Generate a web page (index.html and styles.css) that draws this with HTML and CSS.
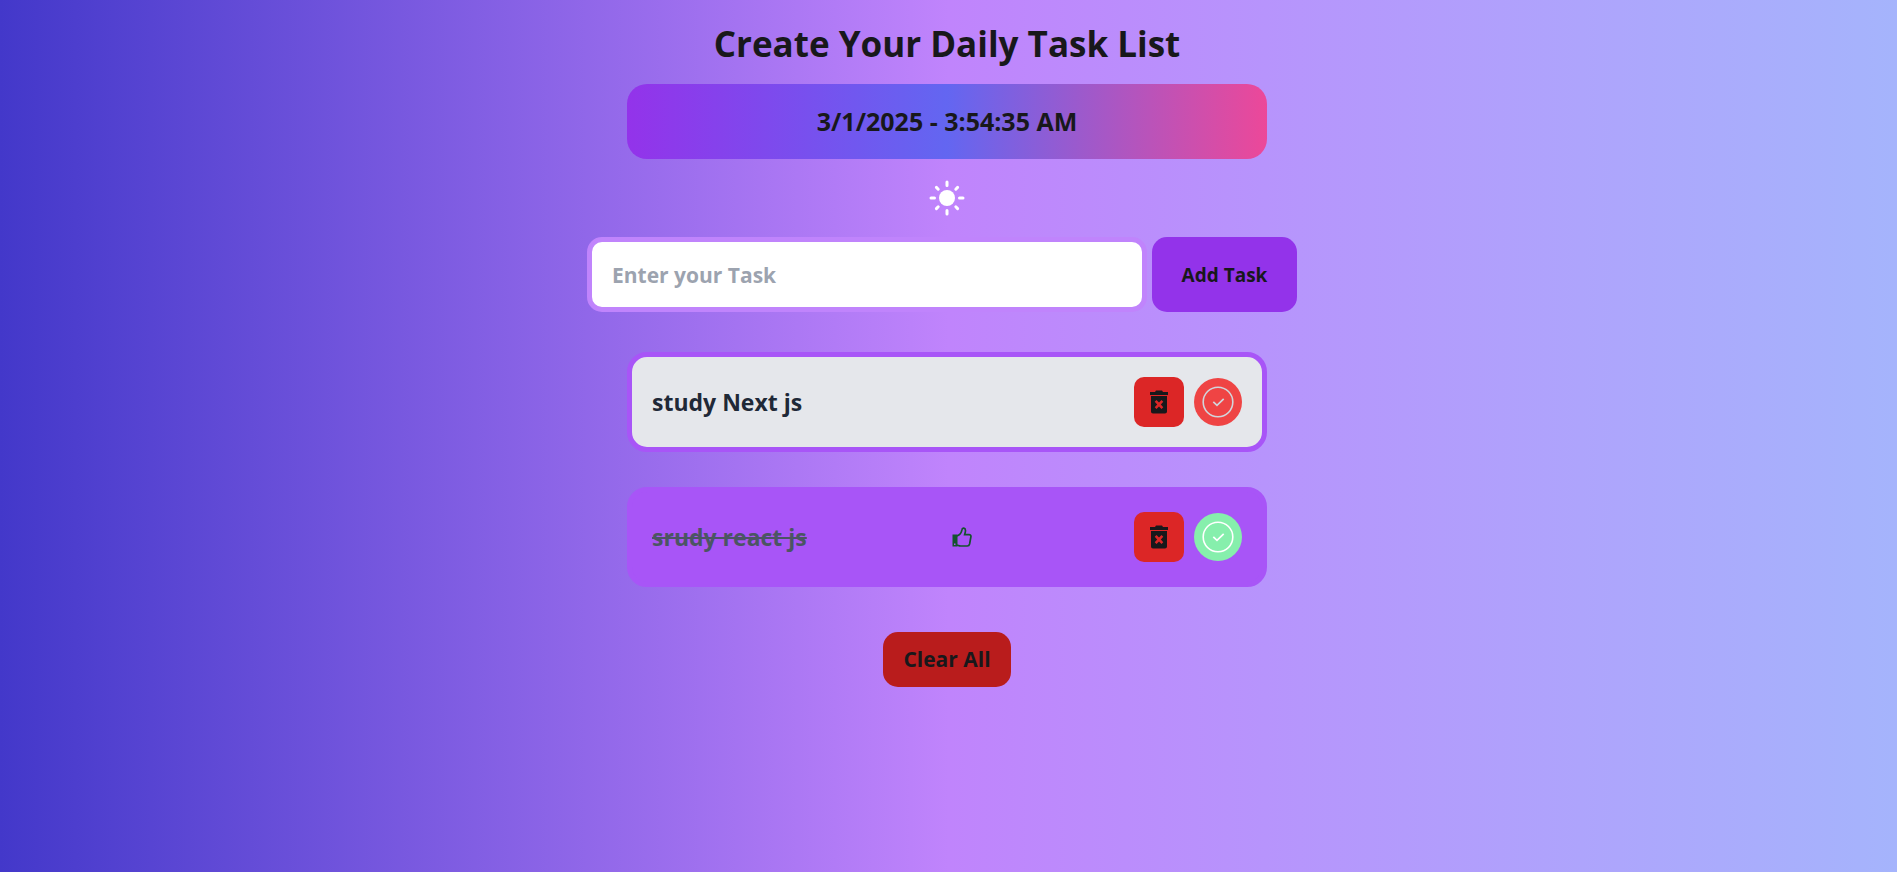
FILE: index.html
```html
<!DOCTYPE html>
<html lang="en">
<head>
<meta charset="utf-8">
<title>Daily Task List</title>
<link rel="stylesheet" href="styles.css">
</head>
<body>
<svg class="sprite" aria-hidden="true">
  <symbol id="trash" viewBox="0 0 24 26">
    <path d="M3 3h5l1-1.500h6L16 3h5v3H3z"/>
    <path fill-rule="evenodd" d="M4 7h16v15.500c0 1.100-.9 2-2 2H6c-1.100 0-2-.9-2-2zM7.700 12.700l2.500 2.800-2.500 2.800 1.800 1.800 2.500-2.700 2.500 2.700 1.800-1.800-2.500-2.800 2.500-2.800-1.800-1.800-2.500 2.700-2.500-2.700z"/>
  </symbol>
  <symbol id="check" viewBox="0 0 32 32">
    <circle cx="16" cy="16" r="14.800" fill="none" stroke="currentColor" stroke-width="1.600"/>
    <path d="M11.300 15.800l3.700 3.500 6.700-6.500" fill="none" stroke="currentColor" stroke-width="1.700"/>
  </symbol>
</svg>
<main class="page">
  <h1 class="title">Create Your Daily Task List</h1>
  <p class="clock">3/1/2025 - 3:54:35 AM</p>
  <button class="theme" type="button" aria-label="Toggle theme">
    <svg viewBox="0 0 40 40" width="40" height="40" stroke="currentColor" stroke-width="3" stroke-linecap="round">
      <circle cx="20" cy="20" r="8" stroke="none"/>
      <path d="M20 4v3.500M20 32.500V36M4 20h3.500M32.500 20H36M9.400 9.400l1.800 1.800M28.800 28.800l1.800 1.800M30.600 9.400l-1.800 1.800M11.200 28.800l-1.800 1.800"/>
    </svg>
  </button>
  <form class="entry">
    <input class="entry-input" type="text" placeholder="Enter your Task" aria-label="Task">
    <button class="entry-add" type="submit">Add Task</button>
  </form>
  <ul class="tasks">
    <li class="task">
      <span class="task-name">study Next js</span>
      <span class="actions">
        <button class="delete" type="button" aria-label="Delete"><svg width="24" height="26"><use href="#trash"/></svg></button>
        <button class="toggle" type="button" aria-label="Mark as done"><svg width="32" height="32"><use href="#check"/></svg></button>
      </span>
    </li>
    <li class="task task-done">
      <span class="task-name">srudy react js</span>
      <svg class="thumb" viewBox="0 0 20 20" width="20" height="20">
        <path d="M5 9c3-1 4.500-3.500 5-6.300.3-2.300 3.500-2 3.500.8 0 1.600-.6 2.800-.9 4.100H17c1.400 0 2.200 1.100 1.900 2.200L17.600 17c-.3 1.300-1 2-2.300 2H9c-1.500 0-2.600-.5-4-1" fill="none" stroke="currentColor" stroke-width="1.700"/>
        <path fill-rule="evenodd" d="M.5 7.500H5.500v12H.500zM2 16.500v1.500h1.500v-1.500z" fill="currentColor"/>
      </svg>
      <span class="actions">
        <button class="delete" type="button" aria-label="Delete"><svg width="24" height="26"><use href="#trash"/></svg></button>
        <button class="toggle" type="button" aria-label="Mark as not done"><svg width="32" height="32"><use href="#check"/></svg></button>
      </span>
    </li>
  </ul>
  <button class="clear" type="button">Clear All</button>
</main>
</body>
</html>
```
FILE: styles.css
```css
* {
  box-sizing: border-box;
}

body {
  margin: 0;
  min-height: 100vh;
  background: linear-gradient(to right, #4338ca, #c084fc, #a5b4fc);
  color: #18181b;
  font-family: "Segoe UI", "Open Sans", "Noto Sans", sans-serif;
  font-weight: 700;
}

button,
input {
  border: 0;
  padding: 0;
  color: inherit;
  font: inherit;
}

button {
  cursor: pointer;
}

svg {
  display: block;
  fill: currentColor;
}

.sprite {
  position: absolute;
  width: 0;
  height: 0;
}

.page {
  display: flex;
  flex-direction: column;
  align-items: center;
  padding: 20px 3px 20px 0;
}

.title {
  margin: 0 0 16px;
  font-size: 35px;
  line-height: 48px;
}

.clock {
  width: 100%;
  max-width: 640px;
  margin: 0 0 19px;
  padding: 20px;
  border-radius: 20px;
  background: linear-gradient(to right, #9333ea, #6366f1, #ec4899);
  font-size: 25px;
  line-height: 35px;
  text-align: center;
}

.theme {
  margin-bottom: 19px;
  background: none;
  color: #fff;
}

.entry {
  display: flex;
  gap: 5px;
  width: 100%;
  max-width: 720px;
  padding-right: 10px;
}

.entry-input {
  flex: 1;
  min-width: 0;
  height: 75px;
  padding: 0 20px;
  border: 5px solid #c084fc;
  border-radius: 15px;
  background: #fff;
  font-size: 21px;
}

.entry-input::placeholder {
  color: #9ca3af;
  opacity: 1;
}

.entry-add {
  width: 145px;
  border-radius: 15px;
  background: #9333ea;
  font-size: 19px;
}

.tasks {
  display: flex;
  flex-direction: column;
  gap: 35px;
  width: 100%;
  max-width: 640px;
  margin: 40px 0 45px;
  padding: 0;
  list-style: none;
}

.task {
  display: flex;
  align-items: center;
  justify-content: space-between;
  padding: 20px;
  border: 5px solid #a855f7;
  border-radius: 20px;
  background: #e5e7eb;
}

.task-name {
  color: #1f2937;
  font-size: 23px;
  line-height: 32px;
}

.task-done {
  background: #a855f7;
}

.task-done .task-name {
  color: #4b5563;
  text-decoration: line-through;
}

.thumb {
  margin-right: 16px;
  color: #14532d;
}

.actions {
  display: flex;
  align-items: center;
  gap: 10px;
}

.delete,
.toggle {
  display: grid;
  place-items: center;
}

.delete {
  width: 50px;
  height: 50px;
  border-radius: 10px;
  background: #dc2626;
}

.toggle {
  width: 48px;
  height: 48px;
  border-radius: 50%;
  background: #ef4444;
  color: #d1d5db;
}

.task-done .toggle {
  background: #86efac;
  color: #fff;
}

.clear {
  padding: 10px 20px;
  border-radius: 15px;
  background: #b91c1c;
  font-size: 21px;
  line-height: 35px;
}
```
